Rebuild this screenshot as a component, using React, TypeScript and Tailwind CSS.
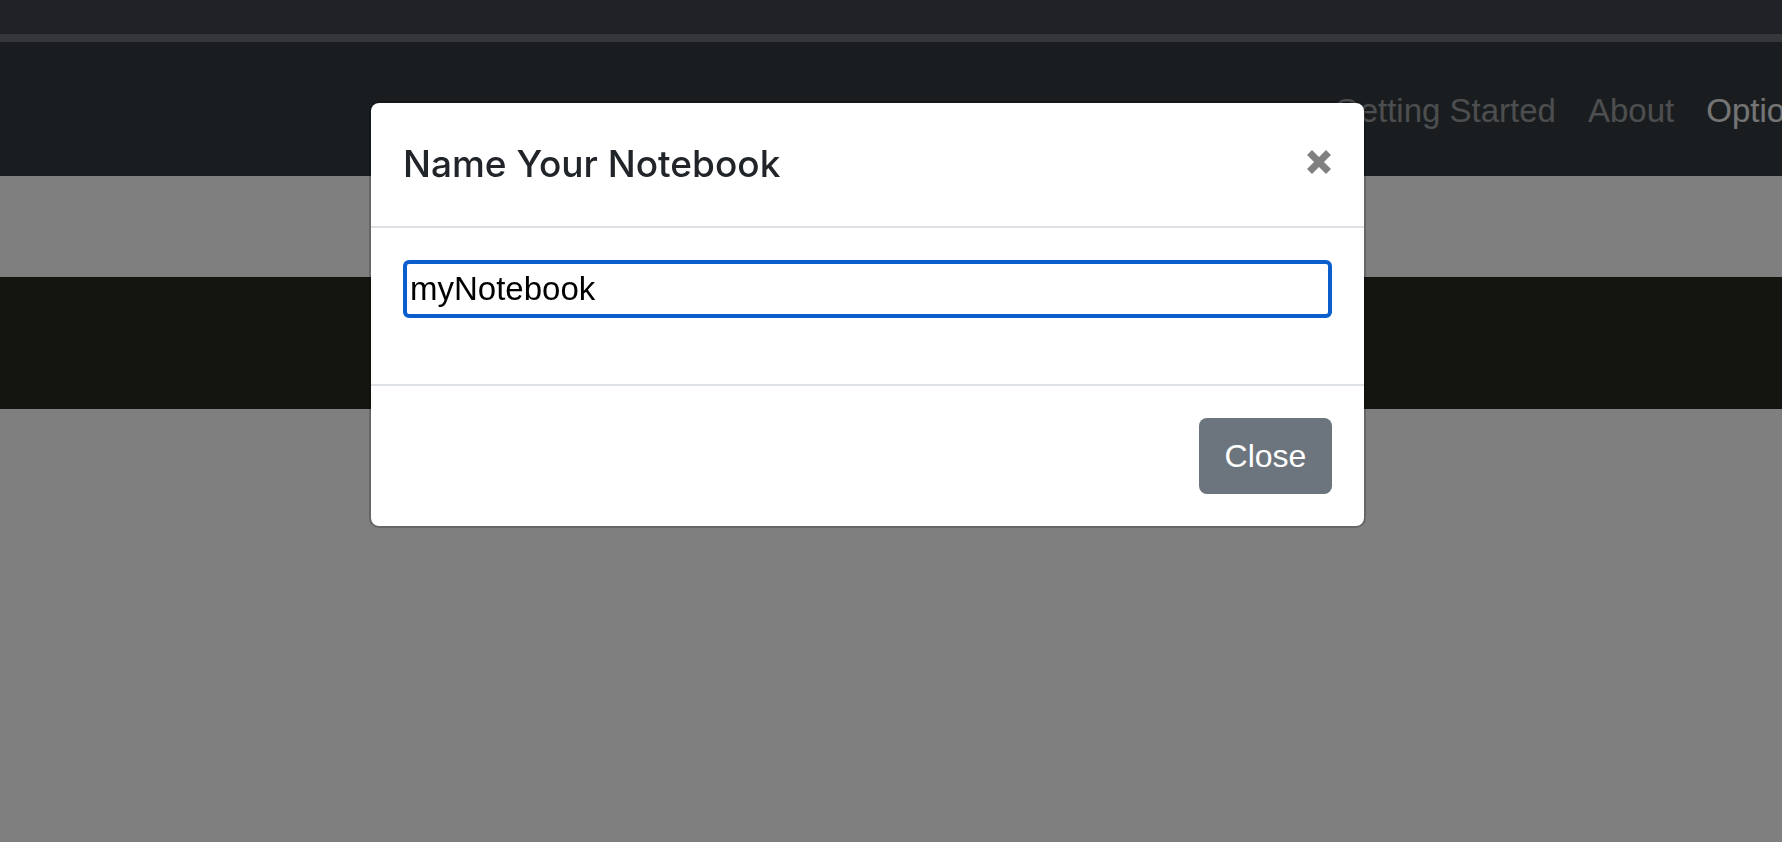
import React from 'react';

const navLinks = [
  { label: 'Getting Started', active: false },
  { label: 'About', active: false },
  { label: 'Options', active: true },
];

function CloseIcon() {
  return (
    <svg width="26" height="26" viewBox="0 0 26 26" aria-hidden="true">
      <path d="M3.5 3.5 L22.5 22.5 M22.5 3.5 L3.5 22.5" stroke="currentColor" strokeWidth="7" />
    </svg>
  );
}

export default function App() {
  return (
    <div className="relative h-[842px] overflow-hidden bg-white font-['Liberation_Sans',Arial,sans-serif]">
      {/* page underneath the backdrop */}
      <div className="h-[34px] bg-[#424450]" />
      <div className="h-2 bg-[#6c6e76]" />
      <nav className="flex h-[134px] items-center overflow-hidden bg-[#343a40] pl-[1318px] pt-1">
        {navLinks.map((link) => (
          <a
            key={link.label}
            href="#"
            className={
              link.active
                ? 'shrink-0 whitespace-nowrap px-[16px] text-[33px] text-white/90'
                : 'shrink-0 whitespace-nowrap px-[16px] text-[33px] text-white/50'
            }
          >
            {link.label}
          </a>
        ))}
      </nav>
      <div className="h-[101px]" />
      <div className="h-[132px] bg-[#282820]" />

      {/* backdrop */}
      <div className="fixed inset-0 bg-black/50" />

      {/* modal */}
      <div className="fixed inset-0 overflow-hidden pl-[369px] pt-[101px]">
        <div className="w-[997px] rounded-[10px] border-2 border-black/20 bg-white bg-clip-padding">
          <div className="flex items-start justify-between border-b-2 border-[#dee2e6] px-8 pt-[31px] pb-[32px]">
            <h5 className="font-['Inter',sans-serif] text-[37px] leading-[60px] font-medium text-[#212529]">
              Name Your Notebook
            </h5>
            <button type="button" className="mt-[15px] text-[#808080]">
              <CloseIcon />
            </button>
          </div>
          <div className="px-8 pt-8 pb-[66px]">
            <input
              type="text"
              defaultValue="myNotebook"
              className="block h-[58px] w-full rounded-[6px] border-4 border-[#0b5fcd] px-[3px] text-[33px] text-black outline-none"
            />
          </div>
          <div className="flex justify-end border-t-2 border-[#dee2e6] px-8 pt-8 pb-8">
            <button
              type="button"
              className="h-[76px] w-[133px] rounded-[8px] bg-[#6c757d] text-[32px] text-white"
            >
              Close
            </button>
          </div>
        </div>
      </div>
    </div>
  );
}
